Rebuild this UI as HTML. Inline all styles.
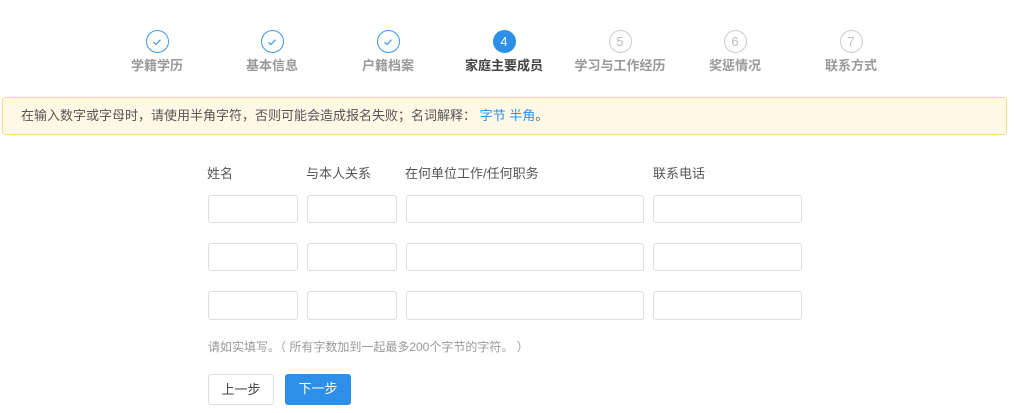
<!DOCTYPE html>
<html><head><meta charset="utf-8"><style>
*{margin:0;padding:0;box-sizing:border-box}
body{width:1014px;height:413px;background:#fff;font-family:"Liberation Sans","Noto Sans CJK SC",sans-serif;position:relative;overflow:hidden;color:#555}
.step{position:absolute;top:30px;width:120px;margin-left:-60px;text-align:center}
.c{width:23px;height:23px;border-radius:50%;margin:0 auto;border:1px solid #3d97e8;display:flex;align-items:center;justify-content:center;font-size:13px}
.c.a{background:#2d8fe8;border-color:#2d8fe8;color:#fff}
.c.f{border-color:#ccc;color:#bbb}
.l{font-size:13px;font-weight:bold;color:#999;margin-top:4px;line-height:18px}
.l.a{color:#444}
.alert{position:absolute;left:2px;top:97px;width:1005px;height:38px;background:#fef8e5;border:1px solid #f6d98f;border-radius:3px;font-size:13px;line-height:36px;padding-left:18px;color:#555}
.alert span{color:#2d8fe8}
.lb{position:absolute;top:163px;font-size:13px;color:#555}
.in{position:absolute;height:28px;border:1px solid #ddd;border-radius:3px}
.note{position:absolute;left:208px;top:338px;font-size:12px;color:#999;white-space:pre}
.btn{position:absolute;top:374px;height:31px;width:66px;border-radius:3px;font-size:13px;line-height:30px;text-align:center}
</style></head><body>
<div class="step" style="left:157px"><div class="c"><svg width="12" height="12" viewBox="0 0 12 12"><path d="M2.5 6.2l2.4 2.3 4.6-4.8" fill="none" stroke="#3d97e8" stroke-width="1.2"/></svg></div><div class="l">学籍学历</div></div>
<div class="step" style="left:272px"><div class="c"><svg width="12" height="12" viewBox="0 0 12 12"><path d="M2.5 6.2l2.4 2.3 4.6-4.8" fill="none" stroke="#3d97e8" stroke-width="1.2"/></svg></div><div class="l">基本信息</div></div>
<div class="step" style="left:388px"><div class="c"><svg width="12" height="12" viewBox="0 0 12 12"><path d="M2.5 6.2l2.4 2.3 4.6-4.8" fill="none" stroke="#3d97e8" stroke-width="1.2"/></svg></div><div class="l">户籍档案</div></div>
<div class="step" style="left:504px"><div class="c a">4</div><div class="l a">家庭主要成员</div></div>
<div class="step" style="left:620px"><div class="c f">5</div><div class="l">学习与工作经历</div></div>
<div class="step" style="left:735px"><div class="c f">6</div><div class="l">奖惩情况</div></div>
<div class="step" style="left:851px"><div class="c f">7</div><div class="l">联系方式</div></div>
<div class="alert">在输入数字或字母时，请使用半角字符，否则可能会造成报名失败；名词解释： <span>字节 半角</span>。</div>
<div class="lb" style="left:207px">姓名</div>
<div class="lb" style="left:306px">与本人关系</div>
<div class="lb" style="left:405px">在何单位工作/任何职务</div>
<div class="lb" style="left:653px">联系电话</div>
<div class="in" style="left:208px;top:195px;width:90px"></div><div class="in" style="left:307px;top:195px;width:90px"></div><div class="in" style="left:406px;top:195px;width:238px"></div><div class="in" style="left:653px;top:195px;width:149px"></div>
<div class="in" style="left:208px;top:243px;width:90px"></div><div class="in" style="left:307px;top:243px;width:90px"></div><div class="in" style="left:406px;top:243px;width:238px"></div><div class="in" style="left:653px;top:243px;width:149px"></div>
<div class="in" style="left:208px;top:291px;width:90px;height:29px"></div><div class="in" style="left:307px;top:291px;width:90px;height:29px"></div><div class="in" style="left:406px;top:291px;width:238px;height:29px"></div><div class="in" style="left:653px;top:291px;width:149px;height:29px"></div>
<div class="note">请如实填写。（ 所有字数加到一起最多200个字节的字符。 ）</div>
<div class="btn" style="left:208px;border:1px solid #ddd;color:#444">上一步</div>
<div class="btn" style="left:285px;background:#2d8fe8;color:#fff">下一步</div>
</body></html>
